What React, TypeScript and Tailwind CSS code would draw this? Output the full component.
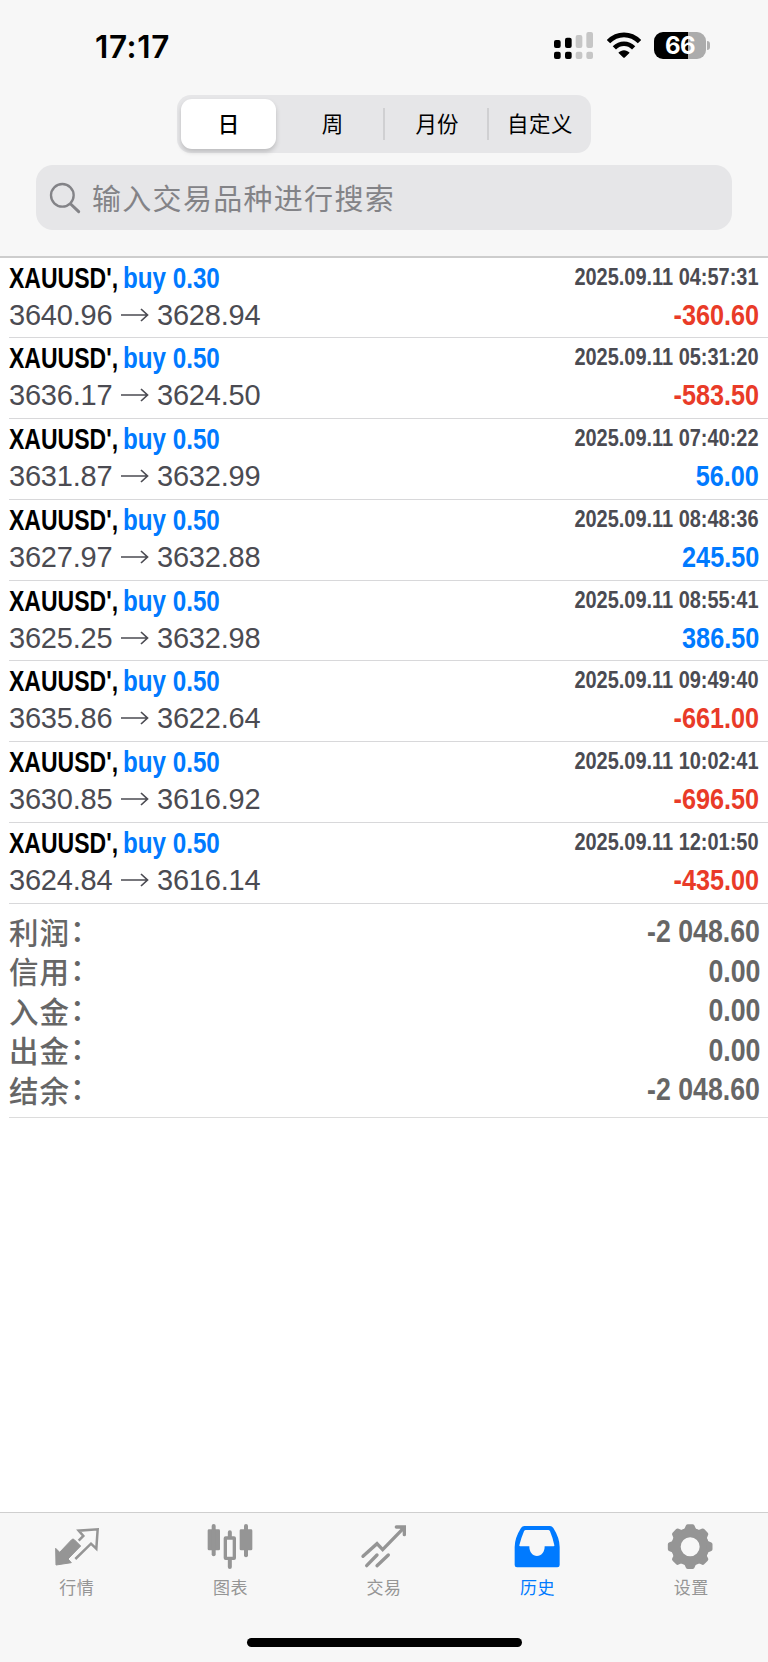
import React from "react";
import clsx from "clsx";

type Deal = {
  lots: string;
  open: string;
  close: string;
  time: string;
  profit: string;
};

const deals: Deal[] = [
  { lots: "0.30", open: "3640.96", close: "3628.94", time: "2025.09.11 04:57:31", profit: "-360.60" },
  { lots: "0.50", open: "3636.17", close: "3624.50", time: "2025.09.11 05:31:20", profit: "-583.50" },
  { lots: "0.50", open: "3631.87", close: "3632.99", time: "2025.09.11 07:40:22", profit: "56.00" },
  { lots: "0.50", open: "3627.97", close: "3632.88", time: "2025.09.11 08:48:36", profit: "245.50" },
  { lots: "0.50", open: "3625.25", close: "3632.98", time: "2025.09.11 08:55:41", profit: "386.50" },
  { lots: "0.50", open: "3635.86", close: "3622.64", time: "2025.09.11 09:49:40", profit: "-661.00" },
  { lots: "0.50", open: "3630.85", close: "3616.92", time: "2025.09.11 10:02:41", profit: "-696.50" },
  { lots: "0.50", open: "3624.84", close: "3616.14", time: "2025.09.11 12:01:50", profit: "-435.00" },
];

const summary = [
  { label: "利润", value: "-2 048.60" },
  { label: "信用", value: "0.00" },
  { label: "入金", value: "0.00" },
  { label: "出金", value: "0.00" },
  { label: "结余", value: "-2 048.60" },
];

const StatusBar: React.FC = () => (
  <div className="flex h-[95px] items-start justify-between pl-[95px] pr-[58px] pt-[27px]">
    <span className="font-['Inter',sans-serif] text-[31.5px] font-semibold leading-[39px] tracking-[0.6px]">
      17:17
    </span>
    <div className="flex pt-[5px]">
      {/* dual sim signal */}
      <svg className="h-[27px] w-[39px]" viewBox="0 0 117 81">
        <g fill="#000">
          <rect x="0" y="24" width="20" height="24" rx="6" />
          <rect x="33" y="17" width="20" height="31" rx="6" />
          <rect x="0" y="59" width="20" height="22" rx="6" />
          <rect x="33" y="59" width="20" height="22" rx="6" />
        </g>
        <g fill="#c6c6c6">
          <rect x="65" y="9" width="20" height="39" rx="6" />
          <rect x="97" y="0" width="20" height="48" rx="6" />
          <rect x="65" y="59" width="20" height="22" rx="6" />
          <rect x="97" y="59" width="20" height="22" rx="6" />
        </g>
      </svg>
      <svg className="ml-[14px] h-[27px] w-[34px]" viewBox="0 0 102 81">
        <g fill="none" stroke="#000" strokeWidth="14">
          <path d="M4.500 29C31 2 71 2 97.500 29" />
          <path d="M22 47.500C39 31 63 31 80 47.500" />
        </g>
        <path d="M34 62C44 52 58 52 68 62L54 76Q51 79 48 76Z" />
      </svg>
      <div className="ml-[13px] flex h-[27px] w-[52px] items-center justify-center rounded-[9px] bg-linear-to-r from-black from-[65%] to-[#acacac] to-[65%] font-['Inter',sans-serif] text-[24px] font-bold leading-none tracking-[-0.5px] text-white">
        66
      </div>
      <div className="ml-[1px] mt-[9px] h-[9px] w-[3px] rounded-r-full bg-[#b0b0b0]" />
    </div>
  </div>
);

const Segments: React.FC = () => (
  <div className="mx-auto flex h-[58px] w-[414px] items-center rounded-[14px] bg-[#e6e6e8] p-[4px] text-[21.5px]">
    <div className="flex h-[50px] w-[95px] items-center justify-center rounded-[11px] bg-white pb-[1px] font-medium shadow-[0_3px_5px_rgba(0,0,0,0.18)]">
      日
    </div>
    <div className="flex h-[32px] w-[109px] items-center justify-center border-r-2 border-[#d0d0d2] pb-[1px] pl-[6px]">
      周
    </div>
    <div className="flex h-[32px] w-[104px] items-center justify-center border-r-2 border-[#d0d0d2] pb-[1px] pl-[2px]">
      月份
    </div>
    <div className="flex flex-1 items-center justify-center pb-[1px] pl-[4px] tracking-[0.5px]">自定义</div>
  </div>
);

const SearchField: React.FC = () => (
  <div className="mx-9 mt-[12px] flex h-[65px] items-center rounded-[17px] bg-[#e6e6e8] pl-[13px] text-[#838387]">
    <svg className="size-[32px]" viewBox="0 0 96 96" fill="none" stroke="#838387">
      <circle cx="40" cy="40" r="34" strokeWidth="7" />
      <path d="M65 66L89 89" strokeWidth="9" strokeLinecap="round" />
    </svg>
    <span className="ml-[11px] text-[29px] tracking-[1.3px]">输入交易品种进行搜索</span>
  </div>
);

// condensed digits and latin: bold sans squeezed horizontally
const Narrow: React.FC<{ className?: string; children: React.ReactNode }> = ({ className, children }) => (
  <span className={clsx("inline-block whitespace-pre font-bold", className)}>{children}</span>
);

const DealRow: React.FC<{ deal: Deal }> = ({ deal }) => {
  const loss = deal.profit.startsWith("-");
  return (
    <div className="ml-[9px] flex h-[80.75px] justify-between border-b border-[#d8d8da] pr-[9px] font-['Liberation_Sans',Arial,sans-serif]">
      <div>
        <div className="flex h-[38px] text-[29.5px] leading-[39px]">
          <Narrow className="w-[114px] origin-left scale-x-[0.78] text-black">XAUUSD&apos;,</Narrow>
          <Narrow className="origin-left scale-x-[0.82] text-[#007aff]">buy {deal.lots}</Narrow>
        </div>
        <div className="flex h-[38px] items-center text-[29px] leading-[38px] text-[#4b4b52]">
          <span className="w-[112px] tracking-[-0.2px]">{deal.open}</span>
          <svg className="h-[14px] w-[28px]" viewBox="0 0 28 14" fill="none" stroke="#4b4b52" strokeWidth="1.700">
            <path d="M0 7H26M20 1L26.500 7L20 13" />
          </svg>
          <span className="ml-[8px] tracking-[-0.2px]">{deal.close}</span>
        </div>
      </div>
      <div className="flex flex-col items-end">
        <Narrow className="h-[38px] origin-right scale-x-[0.835] text-[23.9px] leading-[38px] text-[#4b4b52]">
          {deal.time}
        </Narrow>
        <Narrow
          className={clsx(
            "h-[38px] origin-right scale-x-[0.855] text-[29.5px] leading-[38px]",
            loss ? "text-[#e93b28]" : "text-[#007aff]"
          )}
        >
          {deal.profit}
        </Narrow>
      </div>
    </div>
  );
};

const Summary: React.FC = () => (
  <div className="ml-[9px] h-[214.5px] border-b border-[#dcdcdc] pr-[8px] pt-[8px] text-[#666]">
    {summary.map((item) => (
      <div key={item.label} className="flex h-[39.5px] items-center justify-between">
        <span className="text-[29.5px] font-medium leading-none tracking-[1px]">
          {item.label}
          <span className="inline-block -translate-y-[3px]">：</span>
        </span>
        <Narrow className="origin-right scale-x-[0.875] font-['Liberation_Sans',Arial,sans-serif] text-[30.5px] leading-none">
          {item.value}
        </Narrow>
      </div>
    ))}
  </div>
);

const QuotesIcon: React.FC = () => (
  <svg className="size-[50px]" viewBox="0 0 150 150">
    <path
      d="M12 129L11 79L23 91L59 53Q63 49 67 53L86 72L48 111L58 122Z"
      fill="currentColor"
      stroke="currentColor"
      strokeWidth="3"
      strokeLinejoin="round"
    />
    <path d="M70 111L117 65L133 80L137 22L80 26L94 42L80 56" fill="none" stroke="currentColor" strokeWidth="7.500" />
  </svg>
);

const ChartIcon: React.FC = () => (
  <svg className="size-[50px]" viewBox="0 0 150 150" fill="currentColor">
    <rect x="8" y="22" width="37" height="63" rx="4" />
    <rect x="20" y="6" width="12" height="97" rx="6" />
    <rect x="61" y="48" width="27" height="61" rx="1" fill="none" stroke="currentColor" strokeWidth="10" />
    <path d="M74.500 31V45M74.500 112V135" stroke="currentColor" strokeWidth="12" strokeLinecap="round" />
    <rect x="104" y="22" width="38" height="63" rx="4" />
    <rect x="117" y="6" width="12" height="100" rx="6" />
  </svg>
);

const TradeIcon: React.FC = () => (
  <svg
    className="size-[50px]"
    viewBox="0 0 150 150"
    fill="none"
    stroke="currentColor"
    strokeWidth="10"
    strokeLinecap="round"
  >
    <path d="M12 103L54 65L71 83L133 19" />
    <path d="M112 15H136V38" />
    <path d="M119 15L136 32V15Z" fill="currentColor" stroke="none" />
    <path d="M23 131L54 99M54 131L88 99" />
  </svg>
);

const HistoryIcon: React.FC = () => (
  <svg className="size-[50px]" viewBox="0 0 150 150">
    <path
      fill="currentColor"
      fillRule="evenodd"
      d="M34 12H111Q117 12 121 18Q140 48 140 75V129Q140 136 133 136H12Q5 136 5 129V75Q5 48 24 18Q28 12 34 12ZM38 24Q35 24 33 28Q24 49 19 70Q18 73 22 73H49C49 91 59 102 72 102C85 102 95 91 95 73H121Q125 73 124 70Q120 49 111 28Q109 24 106 24Z"
    />
  </svg>
);

const SettingsIcon: React.FC = () => (
  <svg className="size-[50px]" viewBox="0 0 150 150">
    <circle cx="72.500" cy="74" r="42.500" fill="none" stroke="currentColor" strokeWidth="28" />
    {[0, 45, 90, 135, 180, 225, 270, 315].map((angle) => (
      <path
        key={angle}
        d="M50 24Q57 21 59 12Q60 7 65 7H80Q85 7 86 12Q88 21 95 24Z"
        fill="currentColor"
        transform={`rotate(${angle} 72.5 74)`}
      />
    ))}
  </svg>
);

const tabs = [
  { label: "行情", icon: <QuotesIcon /> },
  { label: "图表", icon: <ChartIcon /> },
  { label: "交易", icon: <TradeIcon /> },
  { label: "历史", icon: <HistoryIcon />, active: true },
  { label: "设置", icon: <SettingsIcon /> },
];

const TabBar: React.FC = () => (
  <nav className="flex h-[150px] flex-col items-center border-t border-[#cfcfcf] bg-[#f7f7f7]">
    <div className="flex h-[125px] w-full pt-[9px]">
      {tabs.map((tab) => (
        <div
          key={tab.label}
          className={clsx("flex flex-1 flex-col items-center", tab.active ? "text-[#007aff]" : "text-[#959595]")}
        >
          {tab.icon}
          <span className="mt-[3px] text-[17px] leading-[24px] tracking-[0.5px]">{tab.label}</span>
        </div>
      ))}
    </div>
    <div className="h-[9px] w-[275px] rounded-full bg-black" />
  </nav>
);

const App: React.FC = () => {
  return (
    <div className="flex h-[1662px] w-[768px] flex-col overflow-hidden bg-white font-['Noto_Sans_CJK_SC',sans-serif] text-black">
      <header className="h-[257.5px] border-b-2 border-[#cdcdcd] bg-[#f7f7f7]">
        <StatusBar />
        <Segments />
        <SearchField />
      </header>
      <main className="flex-1">
        {deals.map((deal) => (
          <DealRow key={deal.time} deal={deal} />
        ))}
        <Summary />
      </main>
      <TabBar />
    </div>
  );
};

export default App;
